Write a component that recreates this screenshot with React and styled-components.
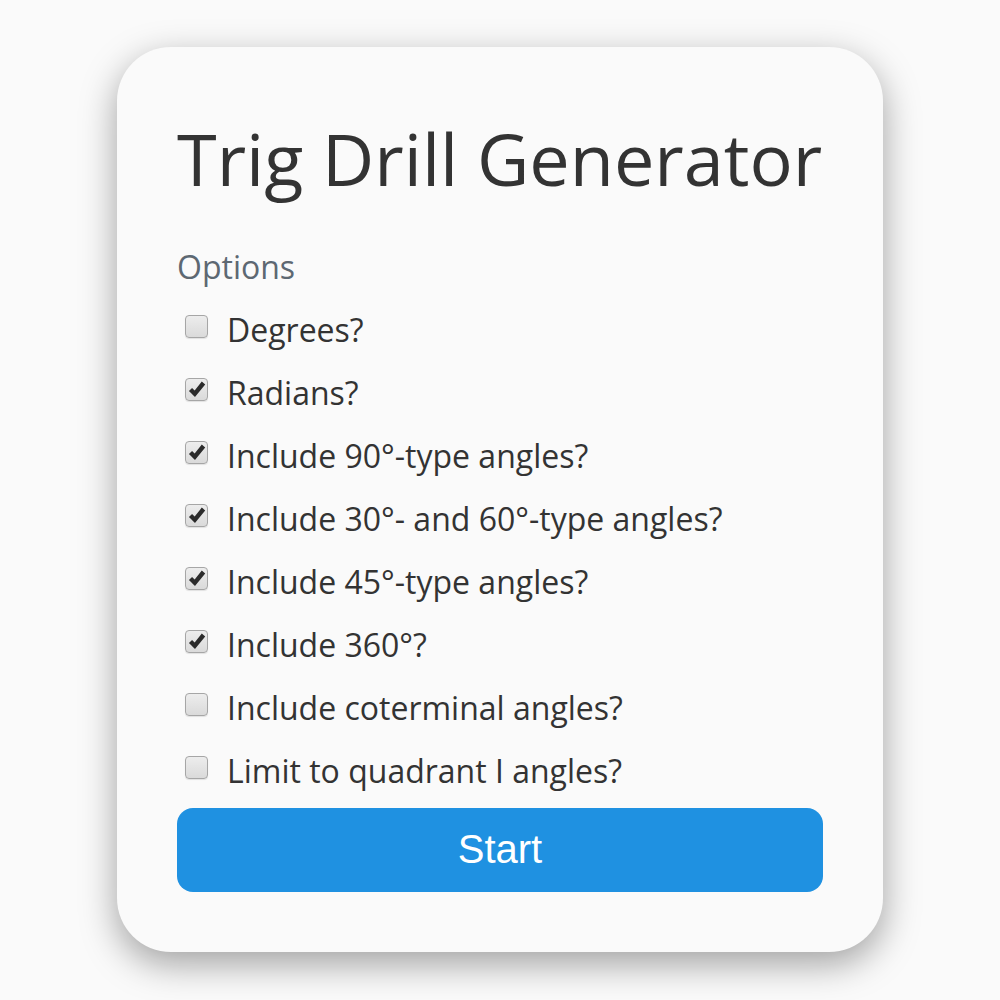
import React, { useState } from "react";
import styled, { createGlobalStyle } from "styled-components";

const GlobalStyle = createGlobalStyle`
  html, body {
    margin: 0;
    padding: 0;
    background: #fafafa;
  }
  body {
    font-family: "Open Sans", "Noto Sans", sans-serif;
  }
`;

const Page = styled.div`
  display: flex;
  justify-content: center;
  padding: 47px 0 48px;
  min-height: 1000px;
  box-sizing: border-box;
`;

const Card = styled.div`
  width: 766px;
  height: 905px;
  box-sizing: border-box;
  padding: 68px 60px 60px;
  background: #fafafa;
  border-radius: 54px;
  box-shadow: 0 12px 36px rgba(0, 0, 0, 0.36);
`;

const Title = styled.h1`
  margin: 0 0 47px;
  font-size: 72px;
  font-weight: 400;
  line-height: 1.2;
  color: #333;
  white-space: nowrap;
`;

const SectionLabel = styled.div`
  font-size: 32px;
  line-height: 1.2;
  color: #5d6872;
  margin-bottom: 11px;
`;

const OptionList = styled.div`
  display: flex;
  flex-direction: column;
  margin-bottom: 6px;
`;

const Row = styled.label`
  display: flex;
  align-items: flex-start;
  height: 63px;
  line-height: 63px;
  font-size: 32px;
  color: #333;
  white-space: nowrap;
  cursor: pointer;
`;

const Box = styled.span`
  flex: none;
  width: 23px;
  height: 23px;
  box-sizing: border-box;
  margin: 17px 19px 0 8px;
  border: 1.5px solid #a6a6a6;
  border-radius: 4px;
  background: linear-gradient(#ededed, #dadada);
  box-shadow: 0 1px 1px rgba(0, 0, 0, 0.1);
  display: flex;
  align-items: center;
  justify-content: center;
`;

const StartButton = styled.button`
  display: block;
  width: 100%;
  height: 84px;
  border: none;
  border-radius: 16px;
  background: #1f91e1;
  color: #fff;
  font-family: "Liberation Sans", Arial, sans-serif;
  font-size: 40px;
  cursor: pointer;
`;

const Check = () => (
  <svg width="18" height="18" viewBox="0 0 18 18">
    <path
      d="M2.5 9.5 L6.8 13.8 L15.5 3"
      fill="none"
      stroke="#2b2b2b"
      strokeWidth="4.4"
      strokeLinejoin="miter"
    />
  </svg>
);

const options = [
  { label: "Degrees?", checked: false },
  { label: "Radians?", checked: true },
  { label: "Include 90°-type angles?", checked: true },
  { label: "Include 30°- and 60°-type angles?", checked: true },
  { label: "Include 45°-type angles?", checked: true },
  { label: "Include 360°?", checked: true },
  { label: "Include coterminal angles?", checked: false },
  { label: "Limit to quadrant I angles?", checked: false },
];

export default function App() {
  const [state, setState] = useState(options.map((o) => o.checked));

  const toggle = (i) => {
    const next = [...state];
    next[i] = !next[i];
    setState(next);
  };

  return (
    <>
      <GlobalStyle />
      <Page>
        <Card>
          <Title>Trig Drill Generator</Title>
          <SectionLabel>Options</SectionLabel>
          <OptionList>
            {options.map((o, i) => (
              <Row key={o.label} onClick={() => toggle(i)}>
                <Box>{state[i] && <Check />}</Box>
                {o.label}
              </Row>
            ))}
          </OptionList>
          <StartButton>Start</StartButton>
        </Card>
      </Page>
    </>
  );
}
